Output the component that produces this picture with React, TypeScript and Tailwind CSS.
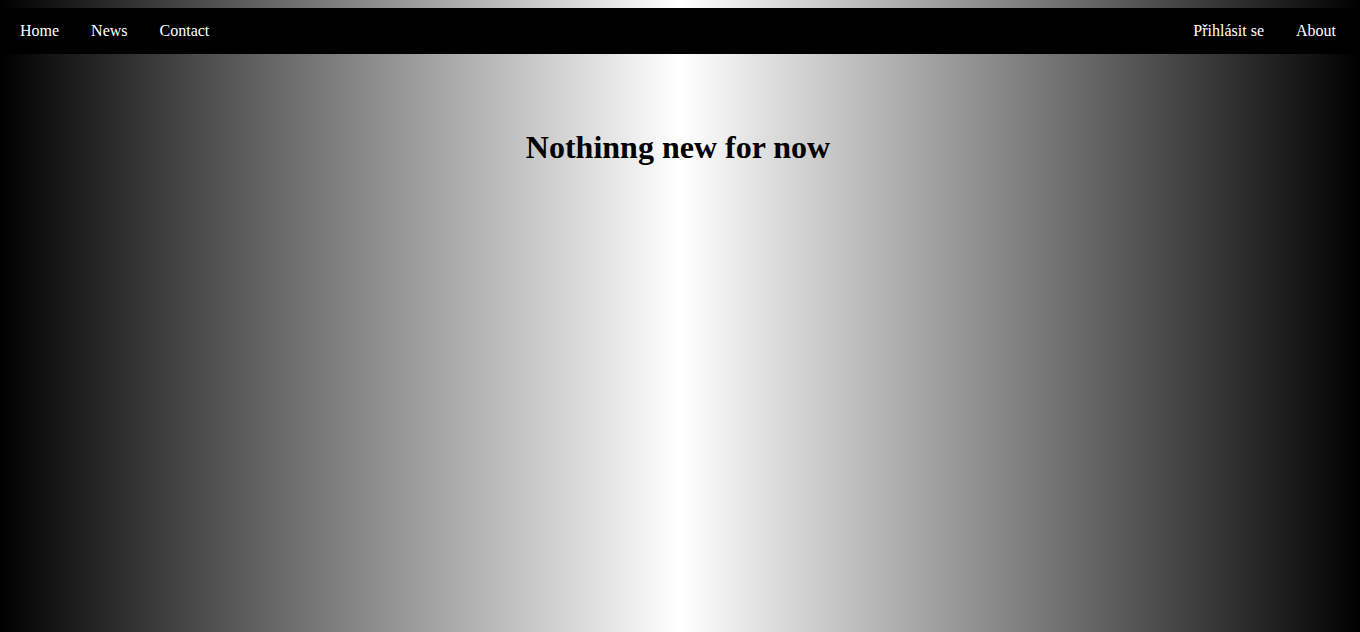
export default function App() {
  return (
    <div
      className="min-h-[632px] w-full pt-[8px] bg-[linear-gradient(to_right,#000000,#ffffff,#000000)]"
      style={{ fontFamily: '"Liberation Serif", "Times New Roman", serif' }}
    >
      <nav className="mx-[4px] h-[46px] bg-black flex items-center justify-between">
        <div className="flex items-center">
          <a className="px-[16px] text-[16px] text-white leading-[46px]">Home</a>
          <a className="px-[16px] text-[16px] text-white leading-[46px]">News</a>
          <a className="px-[16px] text-[16px] text-white leading-[46px]">Contact</a>
        </div>
        <div className="flex items-center pr-[4px]">
          <a className="px-[16px] text-[16px] text-white leading-[46px]">Přihlásit se</a>
          <a className="px-[16px] text-[16px] text-white leading-[46px]">About</a>
        </div>
      </nav>
      <h1 className="mt-[75px] mr-[4px] text-center text-[32px] font-bold text-black leading-[37px]">
        Nothinng new for now
      </h1>
    </div>
  );
}
